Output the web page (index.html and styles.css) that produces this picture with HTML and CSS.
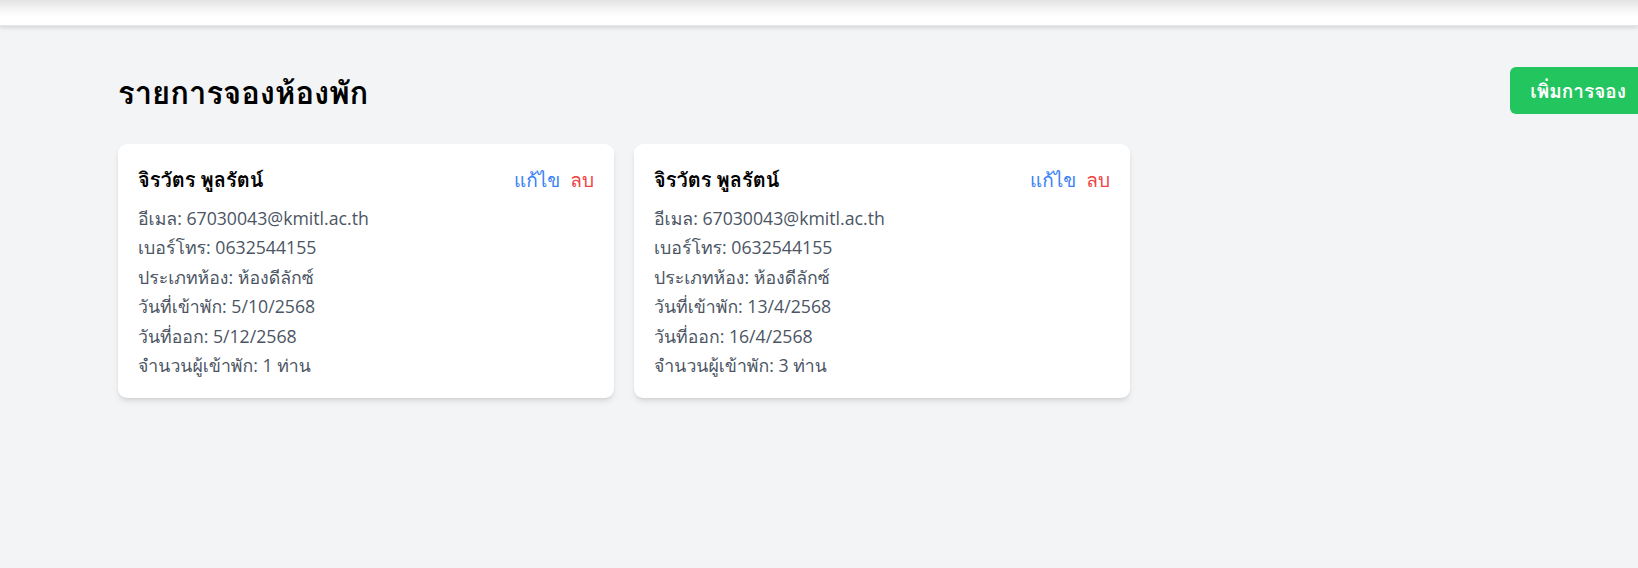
FILE: index.html
```html
<!DOCTYPE html>
<html lang="th">
<head>
<meta charset="utf-8">
<title>รายการจองห้องพัก</title>
<link rel="stylesheet" href="styles.css">
</head>
<body>
<header class="topbar"></header>
<main class="page">
  <div class="page-head">
    <h1 class="page-title">รายการจองห้องพัก</h1>
    <button class="btn-add">เพิ่มการจอง</button>
  </div>
  <div class="grid">
    <div class="card">
      <div class="card-head">
        <span class="card-name">จิรวัตร พูลรัตน์</span>
        <span class="actions"><a class="edit">แก้ไข</a><a class="del">ลบ</a></span>
      </div>
      <div class="card-body">
        <p>อีเมล: 67030043@kmitl.ac.th</p>
        <p>เบอร์โทร: 0632544155</p>
        <p>ประเภทห้อง: ห้องดีลักซ์</p>
        <p>วันที่เข้าพัก: 5/10/2568</p>
        <p>วันที่ออก: 5/12/2568</p>
        <p>จำนวนผู้เข้าพัก: 1 ท่าน</p>
      </div>
    </div>
    <div class="card">
      <div class="card-head">
        <span class="card-name">จิรวัตร พูลรัตน์</span>
        <span class="actions"><a class="edit">แก้ไข</a><a class="del">ลบ</a></span>
      </div>
      <div class="card-body">
        <p>อีเมล: 67030043@kmitl.ac.th</p>
        <p>เบอร์โทร: 0632544155</p>
        <p>ประเภทห้อง: ห้องดีลักซ์</p>
        <p>วันที่เข้าพัก: 13/4/2568</p>
        <p>วันที่ออก: 16/4/2568</p>
        <p>จำนวนผู้เข้าพัก: 3 ท่าน</p>
      </div>
    </div>
  </div>
</main>
</body>
</html>
```
FILE: styles.css
```css
* { box-sizing: border-box; }
html, body { margin: 0; padding: 0; }
body {
  background: #f3f4f6;
  font-family: "Open Sans", "Leelawadee UI", "Loma", "Noto Sans Thai Looped", "Noto Sans", "Noto Sans Thai", sans-serif;
  color: #111827;
  overflow: hidden;
  width: 1638px;
  height: 568px;
}
.topbar {
  height: 26px;
  background: linear-gradient(#e4e4e4 0px, #f6f6f6 10px, #ffffff 16px);
  box-shadow: 0 2px 4px rgba(0,0,0,0.12);
  border-bottom: 1px solid #e5e5e5;
}
.page {
  width: 1528px;
  margin-left: 118px;
  padding-top: 41px;
}
.page-head {
  display: flex;
  justify-content: space-between;
  align-items: center;
  height: 47px;
}
.page-title {
  margin: 0;
  padding-top: 4px;
  font-size: 31px;
  font-weight: 700;
  color: #000;
}
.btn-add {
  height: 47px;
  padding: 0 20px;
  border: none;
  border-radius: 6px;
  background: #22c55e;
  color: #fff;
  font-family: inherit;
  font-size: 19px;
  font-weight: 600;
  white-space: nowrap;
}
.grid {
  display: grid;
  grid-template-columns: repeat(3, 1fr);
  gap: 20px;
  margin-top: 30px;
}
.card {
  background: #fff;
  border-radius: 9px;
  box-shadow: 0 4px 6px -1px rgba(0,0,0,0.1), 0 2px 4px -2px rgba(0,0,0,0.1);
  padding: 20px 20px 18px;
}
.card-head {
  display: flex;
  justify-content: space-between;
  align-items: center;
  height: 32px;
}
.card-name {
  font-size: 20px;
  font-weight: 700;
  color: #000;
}
.actions { font-size: 19px; display: flex; gap: 10px; }
.edit { color: #3b82f6; }
.del { color: #ef4444; }
.card-body { margin-top: 8px; }
.card-body p {
  margin: 0;
  font-size: 17.7px;
  line-height: 29.4px;
  color: #4b5563;
}
```
